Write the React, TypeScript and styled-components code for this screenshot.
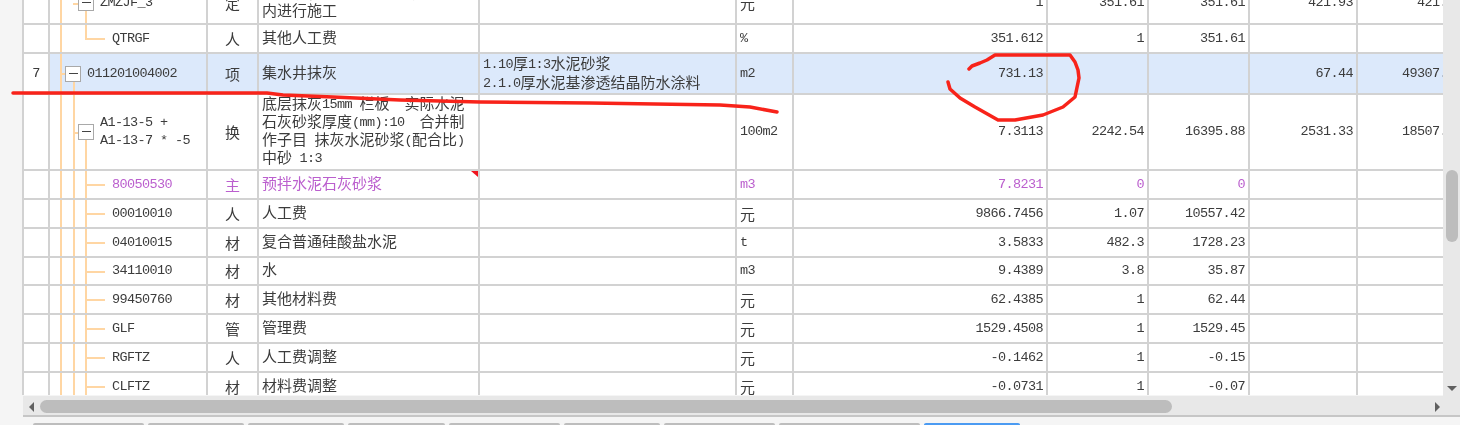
import React from 'react'
import styled, { createGlobalStyle } from 'styled-components'

const GlobalStyle = createGlobalStyle`
  html, body { margin: 0; padding: 0; background: #f5f5f5; }
`

const COLUMNS = '26px 158px 51px 221px 257px 57px 254px 101px 101px 108px 109px'
const PURPLE = '#bb5fce'
const TEXT = '#3c3c3c'
const GUIDE = '#ffd6a3'

const Page = styled.div`
  position: relative;
  width: 1460px;
  height: 425px;
  overflow: hidden;
  display: flex;
  flex-direction: column;
  background: #f5f5f5;
  font-family: 'Liberation Mono', monospace;
  filter: blur(0.4px);
`

const Body = styled.div`
  height: 396px;
  padding-left: 23px;
  display: flex;
`

const Viewport = styled.div`
  width: 1420px;
  overflow: hidden;
  background: #fff;
  border-left: 2px solid #d2d2d2;
  margin-left: -1px;
  height: 395px;
`

const Rows = styled.div`
  margin-top: -17px;
`

const Row = styled.div<{ $h: number; $selected?: boolean; $purple?: boolean }>`
  display: grid;
  grid-template-columns: ${COLUMNS};
  height: ${p => p.$h}px;
  box-sizing: border-box;
  border-bottom: 2px solid #d2d2d2;
  color: ${p => (p.$purple ? PURPLE : TEXT)};
  background: ${p => (p.$selected ? '#dce9fb' : '#fff')};
`

const Cell = styled.div<{ $align?: 'left' | 'center' | 'right'; $pad?: number }>`
  position: relative;
  display: flex;
  align-items: center;
  box-sizing: border-box;
  min-width: 0;
  overflow: hidden;
  border-right: 2px solid #d2d2d2;
  font-size: 13.5px;
  letter-spacing: -0.6px;
  line-height: 18px;
  white-space: pre;
  padding-left: ${p => p.$pad ?? 3}px;
  padding-right: ${p => (p.$align === 'right' ? 3 : 0)}px;
  justify-content: ${p =>
    p.$align === 'right' ? 'flex-end' : p.$align === 'center' ? 'center' : 'flex-start'};
`

const IndexCell = styled(Cell)`
  background: #fff;
`

const SpecText = styled.span`
  line-height: 19px;
`

const Cjk = styled.span`
  font-family: 'Noto Sans CJK SC', sans-serif;
  font-size: 15px;
  letter-spacing: 0;
  line-height: 14px;
  vertical-align: -1px;
`

const Guide = styled.span<{ $x: number; $from?: number; $to?: number }>`
  position: absolute;
  left: ${p => p.$x}px;
  top: ${p => p.$from ?? 0}px;
  ${p => (p.$to === undefined ? 'bottom: 0;' : `height: ${p.$to - (p.$from ?? 0)}px;`)}
  width: 2px;
  background: ${GUIDE};
`

const Branch = styled.span<{ $x: number; $y: number; $w: number }>`
  position: absolute;
  left: ${p => p.$x}px;
  top: ${p => p.$y}px;
  width: ${p => p.$w}px;
  height: 1.5px;
  background: ${GUIDE};
`

const FoldBox = styled.span<{ $x: number; $y: number }>`
  position: absolute;
  left: ${p => p.$x}px;
  top: ${p => p.$y}px;
  width: 16px;
  height: 16px;
  box-sizing: border-box;
  border: 1.5px solid #a9a9a9;
  background: #fff;
  &::after {
    content: '';
    position: absolute;
    left: 2.5px;
    right: 2.5px;
    top: 5.5px;
    height: 1px;
    background: #444;
  }
`

const Flag = styled.span`
  position: absolute;
  top: 0;
  right: 0;
  width: 0;
  height: 0;
  border-top: 6px solid #f0141e;
  border-left: 7px solid transparent;
`

const VScroll = styled.div`
  flex: 1;
  height: 396px;
  box-sizing: border-box;
  padding: 170px 2px 5px 3px;
  background: #e8e8e8;
  display: flex;
  flex-direction: column;
  align-items: center;
  justify-content: space-between;
`

const VThumb = styled.div`
  width: 12px;
  height: 72px;
  border-radius: 6px;
  background: #bdbdbd;
`

const HScroll = styled.div`
  margin-left: 23px;
  height: 21px;
  box-sizing: border-box;
  border-bottom: 2px solid #c6c6c6;
  background: #e8e8e8;
  display: flex;
  align-items: center;
  padding: 2px 20px 0 6px;
`

const HThumb = styled.div`
  width: 1132px;
  height: 13px;
  margin-left: 6px;
  margin-right: auto;
  border-radius: 7px;
  background: #bdbdbd;
`

const Arrow = styled.span<{ $dir: 'left' | 'right' | 'down' }>`
  width: 0;
  height: 0;
  ${p =>
    p.$dir === 'left'
      ? 'border-right: 5px solid #606060; border-top: 5px solid transparent; border-bottom: 5px solid transparent;'
      : p.$dir === 'right'
        ? 'border-left: 5px solid #606060; border-top: 5px solid transparent; border-bottom: 5px solid transparent;'
        : 'border-top: 5px solid #606060; border-left: 5px solid transparent; border-right: 5px solid transparent;'}
`

const TabBar = styled.div`
  flex: 1;
  padding: 6px 0 0 33px;
  display: flex;
  gap: 4px;
  overflow: hidden;
`

const Tab = styled.div<{ $w: number; $active?: boolean }>`
  width: ${p => p.$w}px;
  height: 20px;
  flex: none;
  border-radius: 2px 2px 0 0;
  box-sizing: border-box;
  border-top: 2px solid ${p => (p.$active ? '#4b9bf2' : '#bdbdbd')};
  background: ${p => (p.$active ? '#4b9bf2' : '#f0f0f0')};
`

const Ink = styled.svg`
  position: absolute;
  left: 0;
  top: 0;
  pointer-events: none;
`

const Text = ({ children }: { children: string }) => (
  <>
    {children
      .split(/([\u3000-\u9fff\uff00-\uffef]+)/)
      .map((part, i) => (i % 2 ? <Cjk key={i}>{part}</Cjk> : part))}
  </>
)

type Tree = 'head' | 'last' | 'item' | 'sub' | 'leaf'

const TreeMarks = ({ tree }: { tree: Tree }) => {
  if (tree === 'head') {
    return (
      <>
        <Guide $x={10} />
        <Branch $x={23} $y={20} $w={6} />
        <Guide $x={35} $from={26} />
        <FoldBox $x={28} $y={12} />
      </>
    )
  }
  if (tree === 'last') {
    return (
      <>
        <Guide $x={10} />
        <Guide $x={35} $to={13} />
        <Branch $x={35} $y={13} $w={20} />
      </>
    )
  }
  if (tree === 'item') {
    return (
      <>
        <Guide $x={10} />
        <Branch $x={10} $y={19} $w={6} />
        <Guide $x={23} $from={26} />
        <FoldBox $x={15} $y={12} />
      </>
    )
  }
  if (tree === 'sub') {
    return (
      <>
        <Guide $x={10} />
        <Guide $x={23} />
        <Branch $x={23} $y={37} $w={6} />
        <Guide $x={35} $from={43} />
        <FoldBox $x={28} $y={29} />
      </>
    )
  }
  return (
    <>
      <Guide $x={10} />
      <Guide $x={23} />
      <Guide $x={35} />
      <Branch $x={35} $y={13} $w={20} />
    </>
  )
}

interface Line {
  h: number
  tree: Tree
  pad: number
  code: string
  kind: string
  name: string
  spec?: string
  unit: string
  qty: string
  price?: string
  total?: string
  rate?: string
  sum?: string
  index?: string
  selected?: boolean
  purple?: boolean
  flag?: boolean
}

const lines: Line[] = [
  {
    h: 42,
    tree: 'head',
    pad: 50,
    code: 'ZMZJF_3',
    kind: '定',
    name: '在建筑物主体结构高度范围\n内进行施工',
    unit: '元',
    qty: '1',
    price: '351.61',
    total: '351.61',
    rate: '421.93',
    sum: '421.93'
  },
  { h: 29, tree: 'last', pad: 62, code: 'QTRGF', kind: '人', name: '其他人工费', unit: '%', qty: '351.612', price: '1', total: '351.61' },
  {
    h: 41,
    tree: 'item',
    pad: 37,
    index: '7',
    code: '011201004002',
    kind: '项',
    name: '集水井抹灰',
    spec: '1.10厚1:3水泥砂浆\n2.1.0厚水泥基渗透结晶防水涂料',
    unit: 'm2',
    qty: '731.13',
    rate: '67.44',
    sum: '49307.41',
    selected: true
  },
  {
    h: 76,
    tree: 'sub',
    pad: 50,
    code: 'A1-13-5 +\nA1-13-7 * -5',
    kind: '换',
    name: '底层抹灰15mm 栏板  实际水泥\n石灰砂浆厚度(mm):10  合并制\n作子目 抹灰水泥砂浆(配合比)\n中砂 1:3',
    unit: '100m2',
    qty: '7.3113',
    price: '2242.54',
    total: '16395.88',
    rate: '2531.33',
    sum: '18507.37'
  },
  { h: 29, tree: 'leaf', pad: 62, code: '80050530', kind: '主', name: '预拌水泥石灰砂浆', unit: 'm3', qty: '7.8231', price: '0', total: '0', purple: true, flag: true },
  { h: 29, tree: 'leaf', pad: 62, code: '00010010', kind: '人', name: '人工费', unit: '元', qty: '9866.7456', price: '1.07', total: '10557.42' },
  { h: 29, tree: 'leaf', pad: 62, code: '04010015', kind: '材', name: '复合普通硅酸盐水泥', unit: 't', qty: '3.5833', price: '482.3', total: '1728.23' },
  { h: 28, tree: 'leaf', pad: 62, code: '34110010', kind: '材', name: '水', unit: 'm3', qty: '9.4389', price: '3.8', total: '35.87' },
  { h: 29, tree: 'leaf', pad: 62, code: '99450760', kind: '材', name: '其他材料费', unit: '元', qty: '62.4385', price: '1', total: '62.44' },
  { h: 29, tree: 'leaf', pad: 62, code: 'GLF', kind: '管', name: '管理费', unit: '元', qty: '1529.4508', price: '1', total: '1529.45' },
  { h: 29, tree: 'leaf', pad: 62, code: 'RGFTZ', kind: '人', name: '人工费调整', unit: '元', qty: '-0.1462', price: '1', total: '-0.15' },
  { h: 29, tree: 'leaf', pad: 62, code: 'CLFTZ', kind: '材', name: '材料费调整', unit: '元', qty: '-0.0731', price: '1', total: '-0.07' }
]

const tabWidths = [111, 96, 96, 97, 111, 96, 111, 141]

export default function App() {
  return (
    <Page>
      <GlobalStyle />
      <Body>
        <Viewport>
          <Rows>
            {lines.map(line => (
              <Row key={line.code} $h={line.h} $selected={line.selected} $purple={line.purple}>
                <IndexCell $align="center" $pad={0}>
                  {line.index}
                </IndexCell>
                <Cell $pad={line.pad}>
                  <TreeMarks tree={line.tree} />
                  {line.code}
                </Cell>
                <Cell $align="center" $pad={0}>
                  <Text>{line.kind}</Text>
                </Cell>
                <Cell>
                  <span>
                    <Text>{line.name}</Text>
                  </span>
                  {line.flag && <Flag />}
                </Cell>
                <Cell>
                  <SpecText>
                    <Text>{line.spec ?? ''}</Text>
                  </SpecText>
                </Cell>
                <Cell>
                  <Text>{line.unit}</Text>
                </Cell>
                <Cell $align="right">{line.qty}</Cell>
                <Cell $align="right">{line.price}</Cell>
                <Cell $align="right">{line.total}</Cell>
                <Cell $align="right">{line.rate}</Cell>
                <Cell $align="right">{line.sum}</Cell>
              </Row>
            ))}
          </Rows>
        </Viewport>
        <VScroll>
          <VThumb />
          <Arrow $dir="down" />
        </VScroll>
      </Body>
      <HScroll>
        <Arrow $dir="left" />
        <HThumb />
        <Arrow $dir="right" />
      </HScroll>
      <TabBar>
        {tabWidths.map((w, i) => (
          <Tab key={i} $w={w} />
        ))}
        <Tab $w={96} $active />
      </TabBar>
      <Ink width="1460" height="425" fill="none" stroke="#f8231a" strokeWidth="3.5" strokeLinecap="round" strokeLinejoin="round">
        <path d="M13 93 L267 93 L283 95 L333 97 L400 100 L480 102 L590 103 L720 105 L750 107 L777 112" />
        <path d="M969 69 L972 66 L980 63 L987 60 L995 55 L1070 55 L1075 62 L1078 70 L1079 78 L1075 97 L1063 107 L1043 115 L1015 120 L998 120 L975 107 L960 98 L950 89 L948 82" />
      </Ink>
    </Page>
  )
}
